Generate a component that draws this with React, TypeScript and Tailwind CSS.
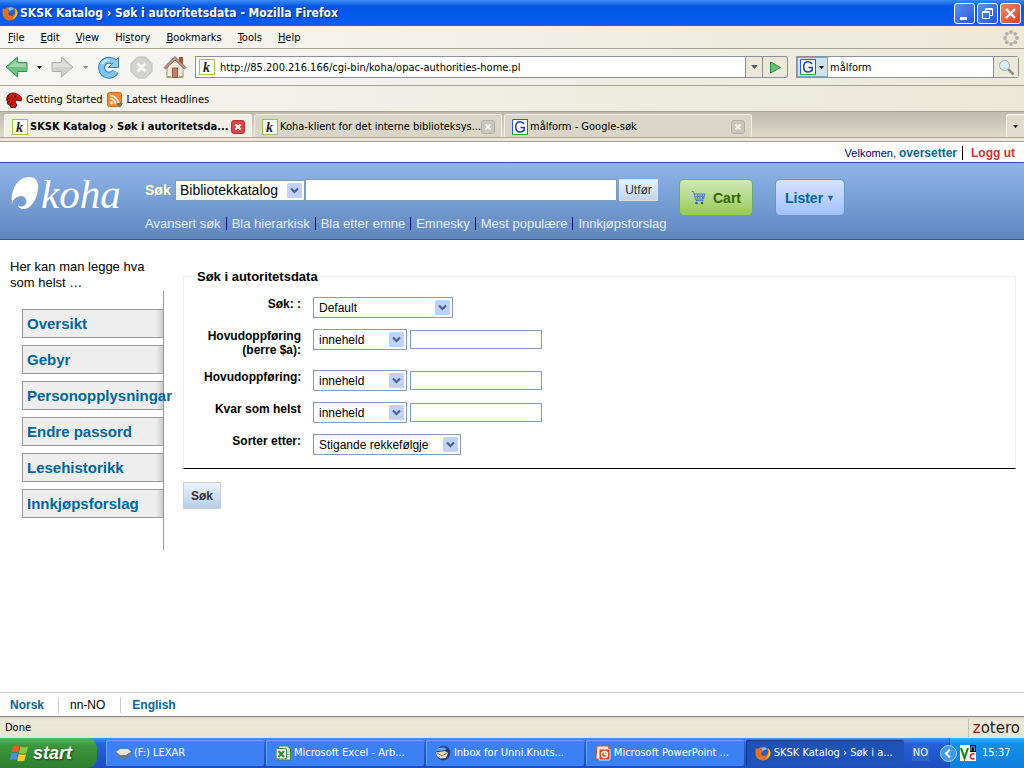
import type { ReactNode } from "react";

const UI = "font-['DejaVu_Sans_Condensed','DejaVu_Sans',sans-serif]";

const MENUS = [
  ["", "F", "ile"],
  ["", "E", "dit"],
  ["", "V", "iew"],
  ["Hi", "s", "tory"],
  ["", "B", "ookmarks"],
  ["", "T", "ools"],
  ["", "H", "elp"],
];

const SEARCH_LINKS = [
  "Avansert søk",
  "Bla hierarkisk",
  "Bla etter emne",
  "Emnesky",
  "Mest populære",
  "Innkjøpsforslag",
];

const SIDE_LINKS = [
  "Oversikt",
  "Gebyr",
  "Personopplysningar",
  "Endre passord",
  "Lesehistorikk",
  "Innkjøpsforslag",
];

export default function App() {
  return (
    <div className="flex min-h-screen flex-col bg-white font-['Liberation_Sans',Arial,sans-serif] text-[13px] leading-4 text-black">
      <TitleBar />
      <BrowserChrome />
      <WelcomeBar />
      <KohaHeader />
      <div className="flex flex-1 items-start">
        <Sidebar />
        <AuthoritySearch />
      </div>
      <LanguageBar />
      <StatusBar />
      <Taskbar />
    </div>
  );
}

/* ---------- browser window ---------- */

function TitleBar() {
  return (
    <header className="flex h-[26px] items-center justify-between bg-linear-to-b from-[#3a8cf5] via-[#0254e3] via-25% to-[#0660f8] pr-[3px] pl-[2px]">
      <div className="flex items-center gap-[2px]">
        <FirefoxIcon />
        <h1 className={`${UI} text-[12px] font-bold text-white [text-shadow:1px_1px_1px_#0a2a80]`}>
          SKSK Katalog › Søk i autoritetsdata - Mozilla Firefox
        </h1>
      </div>
      <div className="flex gap-[2px]">
        <WindowButton label="Minimize">
          <path d="M5 13h7v3H5z" fill="#fff" />
        </WindowButton>
        <WindowButton label="Restore">
          <path d="M7.500 7V4.500h7v7H12M7.500 5.500h7" fill="none" stroke="#fff" />
          <path d="M4.500 7.500h7v7h-7zM4.500 8.500h7" fill="none" stroke="#fff" />
        </WindowButton>
        <WindowButton label="Close" danger>
          <path d="M5 5l9 9M14 5l-9 9" stroke="#fff" strokeWidth="2.400" />
        </WindowButton>
      </div>
    </header>
  );
}

function WindowButton({ label, danger, children }: { label: string; danger?: boolean; children: ReactNode }) {
  return (
    <button
      type="button"
      aria-label={label}
      className={`size-[21px] rounded-[3px] border border-white ${
        danger ? "bg-linear-to-br from-[#f0856a] to-[#d8401f]" : "bg-linear-to-br from-[#5f8ff2] to-[#2458d8]"
      }`}
    >
      <svg viewBox="0 0 19 19" className="size-[19px]">
        {children}
      </svg>
    </button>
  );
}

function BrowserChrome() {
  return (
    <div className={`${UI} text-[11px]`}>
      <div className="flex h-[23px] items-center justify-between border-b border-[#a5a294] bg-linear-to-r from-[#f7f7f5] to-[#ece9d8] pt-px pr-[5px]">
        <nav className="flex">
          {MENUS.map(([before, key, after]) => (
            <button key={key + after} type="button" className="px-2">
              {before}
              <u>{key}</u>
              {after}
            </button>
          ))}
        </nav>
        <Throbber />
      </div>

      <div className="flex h-[37px] items-center border-b border-[#a5a294] bg-linear-to-r from-[#f7f7f5] to-[#ece9d8] pr-[5px] pl-[5px]">
        <button type="button" aria-label="Back"><ArrowIcon fill="#6cc27c" stroke="#2f9a4d" /></button>
        <Caret className="mx-[9px] text-black" />
        <button type="button" aria-label="Forward"><ArrowIcon fill="#d0d0ce" stroke="#b0b0ae" flip /></button>
        <Caret className="mx-[9px] text-[#888]" />
        <button type="button" aria-label="Reload"><ReloadIcon /></button>
        <button type="button" aria-label="Stop" className="ml-[10px]"><StopIcon /></button>
        <button type="button" aria-label="Home" className="ml-[10px]"><HomeIcon /></button>

        <div className="ml-[8px] flex h-[22px] flex-1 items-center border border-[#8a8f99] bg-white pl-[3px]">
          <KohaFavicon />
          <input
            aria-label="Address"
            defaultValue="http://85.200.216.166/cgi-bin/koha/opac-authorities-home.pl"
            className="ml-[5px] h-full min-w-0 flex-1 pt-px outline-none"
          />
          <button type="button" aria-label="Show history" className="flex h-full w-[17px] items-center justify-center border-l border-[#8a8f99] bg-[#ece9d8]">
            <Caret className="text-[#555]" wide />
          </button>
        </div>
        <button type="button" aria-label="Go" className="flex h-[22px] w-[25px] items-center justify-center rounded-r-[3px] border border-l-0 border-[#8a8f99] bg-[#ece9d8]">
          <svg viewBox="0 0 13 13" className="size-[13px]">
            <path d="M1.500 1l10 5.500-10 5.500z" fill="#6cbf78" stroke="#2b8a42" />
          </svg>
        </button>

        <div className="ml-[8px] flex h-[22px] w-[223px] items-center rounded-r-[3px] border border-[#8a8f99] bg-white">
          <button type="button" aria-label="Search engine" className="flex h-full w-[31px] items-center gap-[3px] border border-[#6ab0d0] bg-[#cfe2e8] pl-[2px]">
            <GoogleFavicon />
            <Caret className="text-black" />
          </button>
          <input aria-label="Web search" defaultValue="målform" className="h-full min-w-0 flex-1 pt-px pl-[2px] outline-none" />
          <button type="button" aria-label="Search" className="flex h-full w-[25px] items-center justify-center border-l border-[#8a8f99] bg-[#ece9d8]">
            <svg viewBox="0 0 17 17" className="size-[17px]">
              <path d="M10 10l5.500 5.500" stroke="#8d8d8d" strokeWidth="2.500" />
              <circle cx="6.500" cy="6.500" r="5" fill="#d8ecf6" stroke="#9ab" />
            </svg>
          </button>
        </div>
      </div>

      <div className="flex h-[25px] items-center bg-linear-to-r from-[#f5f4ee] to-[#ebe8d7] pt-[2px] pl-[6px]">
        <a href="#started" className="flex items-center gap-[4px]">
          <DinoIcon />
          Getting Started
        </a>
        <a href="#headlines" className="ml-[4px] flex items-center gap-[4px]">
          <FeedIcon />
          Latest Headlines
        </a>
      </div>

      <div className="border-b border-[#a5a294] bg-[#ece9d8] pb-[3px]">
        <div className="flex h-[27px] items-end gap-[2px] border-t border-b border-t-[#a5a294] border-b-[#a5a294] bg-linear-to-b from-[#bfbcae] to-[#dedbca] pl-[4px]">
          <BrowserTab icon={<KohaFavicon />} title="SKSK Katalog › Søk i autoritetsda..." active />
          <BrowserTab icon={<KohaFavicon />} title="Koha-klient for det interne biblioteksys..." />
          <BrowserTab icon={<GoogleFavicon />} title="målform - Google-søk" />
          <button type="button" aria-label="List tabs" className="ml-auto flex h-[23px] w-[18px] items-center justify-center rounded-tl-[3px] border-t border-l border-[#f8f7f2] bg-[#e0ddce]">
            <Caret className="text-black" />
          </button>
        </div>
      </div>
    </div>
  );
}

function BrowserTab({ icon, title, active }: { icon: ReactNode; title: string; active?: boolean }) {
  return (
    <div
      className={`flex h-[23px] w-[248px] items-center rounded-t-[3px] border border-b-0 pt-px pr-[6px] pl-[7px] ${
        active ? "border-[#fbfaf6] bg-[#f2f0e6] font-bold" : "border-[#f0eee4] bg-[#d9d6c7]"
      }`}
    >
      {icon}
      <span className="ml-[2px] min-w-0 flex-1 whitespace-nowrap">{title}</span>
      <button type="button" aria-label="Close tab">
        <svg viewBox="0 0 14 14" className="size-[14px]">
          <rect x=".5" y=".5" width="13" height="13" rx="2.500" fill={active ? "#d9474b" : "#c9c7bd"} stroke={active ? "#b03338" : "#b3b1a6"} />
          <path d="M4.500 4.500l5 5M9.500 4.500l-5 5" stroke={active ? "#fff" : "#f2f1ea"} strokeWidth="2" />
        </svg>
      </button>
    </div>
  );
}

function StatusBar() {
  return (
    <div className={`${UI} flex h-[22px] items-center justify-between border-t border-[#85837a] bg-linear-to-b from-[#dedbcb] via-[#ece9d8] via-20% to-[#e8e5d4] pl-[5px] text-[11px]`}>
      <span>Done</span>
      <div className="flex h-[18px] items-center border-l border-[#c5c2b2] px-[4px] font-['DejaVu_Sans',sans-serif] text-[15px] text-[#222]">
        <span className="text-[#991111]">z</span>otero
      </div>
    </div>
  );
}

/* ---------- catalogue page ---------- */

function WelcomeBar() {
  return (
    <div className="flex h-[20px] items-center justify-end pt-px pr-[9px] text-[12px]">
      <span className="text-[11px] text-[#000066]">Velkomen,</span>
      <a href="#user" className="ml-[3px] font-bold text-[#006699]">oversetter</a>
      <a href="#logout" className="ml-[5px] border-l border-black pl-[8px] leading-[14px] font-bold text-[#cc3333]">Logg ut</a>
    </div>
  );
}

function KohaHeader() {
  return (
    <div className="flex h-[78px] items-start border-y border-[#335599] bg-linear-to-b from-[#8fb5e9] to-[#6088be]">
      <a href="#home" aria-label="koha" className="flex w-[145px] shrink-0 pt-[11px] pl-[11px] text-white">
        <svg viewBox="0 0 28 34" className="mt-[2px] h-[34px] w-[28px] shrink-0">
          <path
            d="M1 29C-1 15 6 1 18 1c6 0 10 4 9 12-1 10-7 20-14 20-4 0-6-2-6-4 2 2 5 2 7 0 3-3 1-9-4-9-5 0-9 4-9 9z"
            fill="#fff"
          />
        </svg>
        <span className="ml-[2px] font-['Liberation_Serif',serif] text-[41px] leading-[40px] italic">koha</span>
      </a>

      <div className="w-[534px] shrink-0 pt-4">
        <form className="flex items-center" onSubmit={(e) => e.preventDefault()}>
          <label htmlFor="masthead" className="w-[30px] text-[14px] font-bold text-[#ffffcc]">Søk</label>
          <Select id="masthead" className="w-[130px]" textClass="pl-1 text-[14px]" value="Bibliotekkatalog" />
          <input aria-label="Søkjeord" className="h-[22px] w-[312px] border border-[#7f9db9] bg-white px-1 outline-none" />
          <button type="submit" className="ml-[2px] h-[22px] w-[39px] border border-[#e0e0e0] bg-linear-to-b from-[#eaf4fc] to-[#bfd5ea] text-[12px] text-[#333]">
            Utfør
          </button>
        </form>
        <nav className="mt-4 flex whitespace-nowrap">
          {SEARCH_LINKS.map((label) => (
            <a
              key={label}
              href="#search"
              className="mr-[5px] shrink-0 border-r border-[#000088] pr-[5px] leading-[13px] text-[#e4ecfa] last:border-r-0"
            >
              {label}
            </a>
          ))}
        </nav>
      </div>

      <button type="button" className="mt-4 flex h-[37px] w-[74px] shrink-0 items-center justify-center gap-[7px] rounded-[5px] border border-[#6aa886] bg-linear-to-b from-[#d3e8b8] to-[#97ca50] text-[14px] font-bold text-[#336600]">
        <CartIcon />
        Cart
      </button>
      <button type="button" className="mt-4 ml-[22px] flex h-[37px] w-[70px] shrink-0 items-center justify-center gap-[3px] rounded-[5px] border border-[#6198d4] bg-linear-to-b from-[#d6e2fe] to-[#a0c0ff] text-[14px] font-bold text-[#006699]">
        Lister
        <span className="text-[9px] text-[#336699]">▼</span>
      </button>
    </div>
  );
}

function Sidebar() {
  return (
    <aside className="w-[164px] shrink-0 pt-[19px]">
      <p className="pl-[10px]">Her kan man legge hva som helst …</p>
      <nav className="flex flex-col gap-[7px] border-r border-[#999] pt-[18px] pb-8 pl-[22px]">
        {SIDE_LINKS.map((label) => (
          <a
            key={label}
            href="#account"
            className="flex h-[29px] items-center border border-r-0 border-[#999] bg-linear-to-r from-[#eee] from-95% to-[#ccc] pl-1 text-[15px] font-bold whitespace-nowrap text-[#006699]"
          >
            {label}
          </a>
        ))}
      </nav>
    </aside>
  );
}

function AuthoritySearch() {
  return (
    <form className="min-w-0 flex-1 pt-7 pr-2 pl-[19px]" onSubmit={(e) => e.preventDefault()}>
      <fieldset className="border border-[#eee] border-b-black pb-[13px]">
        <legend className="ml-[13px] pt-px font-bold">Søk i autoritetsdata</legend>
        <div className="flex flex-col gap-[11px] pt-3">
          <Field id="authtype" label="Søk: :">
            <Select id="authtype" className="w-[140px]" value="Default" />
          </Field>
          <Field id="mainentry" label="Hovudoppføring (berre $a):">
            <MatchInputs id="mainentry" />
          </Field>
          <Field id="match" label="Hovudoppføring:">
            <MatchInputs id="match" />
          </Field>
          <Field id="anywhere" label="Kvar som helst">
            <MatchInputs id="anywhere" />
          </Field>
          <Field id="orderby" label="Sorter etter:">
            <Select id="orderby" className="w-[148px]" value="Stigande rekkefølgje" />
          </Field>
        </div>
      </fieldset>
      <button type="submit" className="mt-[13px] h-[27px] w-[38px] border border-[#ccc] bg-linear-to-b from-[#eaf4fc] to-[#b5cee6] text-[12px] font-bold text-[#333]">
        Søk
      </button>
    </form>
  );
}

function Field({ id, label, children }: { id: string; label: string; children: ReactNode }) {
  return (
    <div className="flex items-start">
      <label htmlFor={id} className="w-[117px] pb-[2px] pl-5 text-right text-[12px] leading-[14px] font-bold">
        {label}
      </label>
      <div className="ml-3 flex items-center gap-[3px]">{children}</div>
    </div>
  );
}

function MatchInputs({ id }: { id: string }) {
  return (
    <>
      <Select id={id} className="w-[94px]" value="inneheld" />
      <input aria-label="Verdi" className="h-[19px] w-[132px] border border-[#7f9db9] bg-white px-1 outline-none" />
    </>
  );
}

function Select({ id, value, className, textClass = "pl-[5px] text-[12px]" }: { id: string; value: string; className: string; textClass?: string }) {
  return (
    <div className={`relative h-[21px] ${className}`}>
      <select id={id} className={`size-full appearance-none border border-[#7f9db9] bg-white outline-none ${textClass}`}>
        <option>{value}</option>
      </select>
      <svg viewBox="0 0 15 15" className="pointer-events-none absolute top-[3px] right-[3px] size-[15px]">
        <rect width="15" height="15" rx="1.500" fill="#c0d2fb" />
        <path d="M4 5.500l3.500 3.500L11 5.500" fill="none" stroke="#4d6185" strokeWidth="2.200" />
      </svg>
    </div>
  );
}

function LanguageBar() {
  return (
    <footer className="flex h-6 items-center border-t border-[#ccc] pl-[10px] text-[12px]">
      <a href="#no" className="border-r border-[#ccc] pr-[14px] font-bold text-[#006699]">Norsk</a>
      <span className="border-r border-[#ccc] pr-[15px] pl-[11px]">nn-NO</span>
      <a href="#en" className="pl-[11px] font-bold text-[#006699]">English</a>
    </footer>
  );
}

/* ---------- desktop taskbar ---------- */

function Taskbar() {
  return (
    <div className={`${UI} flex h-[30px] items-center bg-linear-to-b from-[#4a90f0] via-[#2560dc] via-20% to-[#1d4ec0] text-[11px] text-white`}>
      <button type="button" className="flex h-full w-[97px] items-center gap-[4px] rounded-r-[10px] bg-linear-to-b from-[#62b562] via-[#3c963c] via-25% to-[#2d7f2d] pl-[10px] font-['Liberation_Sans',sans-serif] text-[18px] font-bold italic [text-shadow:1px_1px_2px_#1a401a]">
        <WindowsFlag />
        start
      </button>
      <div className="ml-[9px] flex h-[26px] min-w-0 flex-1 gap-[2px]">
        <Task icon={<DriveIcon />} title="(F:) LEXAR" />
        <Task icon={<ExcelIcon />} title="Microsoft Excel - Arb..." />
        <Task icon={<ThunderbirdIcon />} title="Inbox for Unni.Knuts..." />
        <Task icon={<PowerPointIcon />} title="Microsoft PowerPoint ..." />
        <Task icon={<FirefoxIcon />} title="SKSK Katalog › Søk i a..." active />
      </div>
      <span className="ml-[8px] bg-[#3565c8] px-px">NO</span>
      <button type="button" aria-label="Show hidden icons" className="z-10 -mr-2 ml-[11px]">
        <svg viewBox="0 0 17 17" className="size-[17px]">
          <circle cx="8.500" cy="8.500" r="8" fill="#3f9ae8" stroke="#a5d2fa" />
          <path d="M10 4.500l-4 4 4 4" fill="none" stroke="#fff" strokeWidth="2" />
        </svg>
      </button>
      <div className="flex h-full w-[75px] items-center gap-[6px] border-l border-[#0b4fa0] bg-linear-to-b from-[#3ab2f5] via-[#1290e8] via-20% to-[#0f80dc] pl-[10px]">
        <VncIcon />
        <span>15:37</span>
      </div>
    </div>
  );
}

function Task({ icon, title, active }: { icon: ReactNode; title: string; active?: boolean }) {
  return (
    <button
      type="button"
      className={`flex min-w-0 flex-1 items-center gap-[3px] overflow-hidden rounded-[2px] pl-[9px] whitespace-nowrap ${
        active ? "bg-[#1e52b7] shadow-[inset_1px_1px_1px_#123a85]" : "bg-[#3c81f3] shadow-[inset_1px_1px_1px_#6aa3fa]"
      }`}
    >
      {icon}
      {title}
    </button>
  );
}

/* ---------- icons ---------- */

function Caret({ className, wide }: { className: string; wide?: boolean }) {
  return (
    <svg viewBox="0 0 5 3" className={`shrink-0 ${wide ? "h-[4px] w-[7px]" : "h-[3px] w-[5px]"} ${className}`}>
      <path d="M0 0h5L2.500 3z" fill="currentColor" />
    </svg>
  );
}

function FirefoxIcon() {
  return (
    <svg viewBox="0 0 16 16" className="size-4 shrink-0">
      <circle cx="8.500" cy="7.500" r="6.500" fill="#2b5fb8" />
      <path d="M6 3c2-1 5-1 6 1l-2 1-3 1z" fill="#7fc0ee" />
      <path d="M1 3l2 1c1-1 2-1.500 3.500-1.500L5.500 5l2.500 1.500L6 8c0 2 1.500 3 3.500 3S13 9 13 7c0-2-1-3-1-4 2 1 3.500 3 3.500 5.500A7.300 7.300 0 0 1 8 15.500C4 15.500.5 12.500.5 8.500.5 6.500.5 5 1 3z" fill="#e8701a" />
      <path d="M13 3c2 2 2.500 4 2.500 5.500-.5 3-3 5-5.500 5.500 3-2 4.500-6 3-11z" fill="#fbc53a" />
    </svg>
  );
}

function KohaFavicon() {
  return (
    <svg viewBox="0 0 16 16" className="size-4 shrink-0">
      <rect x=".5" y=".5" width="15" height="15" fill="#fff" stroke="#99cc33" />
      <text x="4" y="13" fontFamily="Liberation Serif, serif" fontSize="14" fontStyle="italic" fontWeight="bold" fill="#222">k</text>
    </svg>
  );
}

function GoogleFavicon() {
  return (
    <svg viewBox="0 0 16 16" className="size-4 shrink-0">
      <path d="M0 0h16v16H0z" fill="#fff" />
      <path d="M.5 16V.5H15" fill="none" stroke="#2a5bd7" />
      <path d="M15.500 0v15" fill="none" stroke="#d8242a" />
      <path d="M0 15.500h16" fill="none" stroke="#2ca53c" />
      <path d="M12 5C11 3.300 9.800 2.800 8.300 2.800 5.500 2.800 3.700 5 3.700 8s1.800 5 4.600 5c1.700 0 3-.7 3.900-1.600V8.500H8.500" fill="none" stroke="#1e3fae" strokeWidth="1.500" />
    </svg>
  );
}

function ArrowIcon({ fill, stroke, flip }: { fill: string; stroke: string; flip?: boolean }) {
  return (
    <svg viewBox="0 0 23 22" className={`h-[22px] w-[23px] ${flip ? "-scale-x-100" : ""}`}>
      <path d="M1 11L12.500 1v5.500H22v9h-9.500V21z" fill={fill} stroke={stroke} strokeLinejoin="round" />
      <path d="M3.500 11l8-7v3.500H21v3.500z" fill="#fff" opacity=".35" />
    </svg>
  );
}

function ReloadIcon() {
  return (
    <svg viewBox="0 0 23 23" className="size-[23px]">
      <path d="M18.500 15.500A7.500 7.500 0 1 1 17 6" fill="none" stroke="#2f7fc4" strokeWidth="7" />
      <path d="M18.500 15.500A7.500 7.500 0 1 1 17 6" fill="none" stroke="#7fc4f0" strokeWidth="5" />
      <path d="M21.500 1.500v10h-10z" fill="#8fcdf4" stroke="#2f7fc4" strokeLinejoin="round" />
      <path d="M16.500 6.500l2-2" stroke="#8fcdf4" strokeWidth="4" />
      <path d="M5 8c1.500-3 5-4.500 8-3.500" fill="none" stroke="#d3edfc" strokeWidth="2" />
    </svg>
  );
}

function StopIcon() {
  return (
    <svg viewBox="0 0 23 23" className="size-[23px]">
      <path d="M7.500 1h8L22 7.500v8L15.500 22h-8L1 15.500v-8z" fill="#d2d2d0" stroke="#bcbcba" />
      <path d="M7.500 7.500l8 8M15.500 7.500l-8 8" stroke="#f4f4f2" strokeWidth="3" />
    </svg>
  );
}

function HomeIcon() {
  return (
    <svg viewBox="0 0 24 24" className="size-6">
      <path d="M16 2h4v7h-4z" fill="#b0523c" />
      <path d="M4 11.500L12 4l8 7.500V22.500H4z" fill="#f3e7d8" stroke="#a08d7c" />
      <path d="M1 12.500L12 1.500l11 11-1.500 1.500L12 5l-9.500 9z" fill="#bb9486" stroke="#7f5a4e" strokeWidth=".8" />
      <path d="M9.500 13h5v9.500h-5z" fill="#c08070" stroke="#9a5545" />
      <path d="M4 21h4v1.500H4zM16 21h4v1.500h-4z" fill="#8dbb5c" />
    </svg>
  );
}

function DinoIcon() {
  return (
    <svg viewBox="0 0 16 16" className="size-4">
      <path d="M1 8C0 4 3 1 7 1c3 0 5 1 8 4l1 3-2 1-4-1-1 2 2 3-2 3H5L4 13 1.500 12z" fill="#d0170f" stroke="#400" strokeWidth=".8" />
      <path d="M1 5l3-3M.5 8l3-2M1 11l3-2M4 13.500l2-3" stroke="#200" />
      <circle cx="9" cy="4.500" r="1" fill="#300" />
    </svg>
  );
}

function FeedIcon() {
  return (
    <svg viewBox="0 0 16 16" className="size-4">
      <rect x=".5" y=".5" width="14" height="14" rx="2" fill="#f08a2c" stroke="#cc6a15" />
      <circle cx="4.500" cy="11" r="1.400" fill="#fff" />
      <path d="M3 6.500a5.500 5.500 0 0 1 5.500 5.500M3 3.500a8.500 8.500 0 0 1 8.500 8.500" fill="none" stroke="#fff" strokeWidth="1.600" />
      <path d="M9 11h7l-3.500 4.500z" fill="#6b7280" />
    </svg>
  );
}

function Throbber() {
  return (
    <svg viewBox="0 0 16 16" className="size-4" fill="#b0aeaa">
      <circle cx="8" cy="2" r="1.900" />
      <circle cx="12.200" cy="3.800" r="1.900" />
      <circle cx="14" cy="8" r="1.900" />
      <circle cx="12.200" cy="12.200" r="1.900" />
      <circle cx="8" cy="14" r="1.900" />
      <circle cx="3.800" cy="12.200" r="1.900" />
      <circle cx="2" cy="8" r="1.900" />
      <circle cx="3.800" cy="3.800" r="1.900" />
    </svg>
  );
}

function CartIcon() {
  return (
    <svg viewBox="0 0 15 15" className="size-[15px]">
      <path d="M.5 1.500h2L5 10.500h7.500M3 4h11l-1.500 5H5M3.500 6.500h10M6.500 4v5M9 4v5M11.500 4v5" fill="none" stroke="#4a7fc0" />
      <circle cx="5.500" cy="13" r="1.300" fill="#2e5f9e" />
      <circle cx="11" cy="13" r="1.300" fill="#2e5f9e" />
    </svg>
  );
}

function WindowsFlag() {
  return (
    <svg viewBox="0 0 19 18" className="h-[18px] w-[19px]">
      <path d="M3 2c2-1.300 4.500-1 6.500 0L8 8.500C6 7.500 3.500 7.500 1.500 8.500z" fill="#ee5a26" />
      <path d="M10.500 2.500c2 1 4.500 1.200 7.500 0L16.500 9c-2.500 1.200-5 1-7.500-.1z" fill="#8ac63f" />
      <path d="M1.200 9.500c2-1 4.500-1 6.500 0L6.300 16c-2-1-4.300-1-6.300 0z" fill="#4c8ef0" />
      <path d="M8.700 10c2.300 1 4.800 1.200 7.300 0l-1.500 6.500c-2.500 1.200-5 1-7.300-.1z" fill="#fbc92d" />
    </svg>
  );
}

function DriveIcon() {
  return (
    <svg viewBox="0 0 16 16" className="size-4 shrink-0">
      <path d="M1 7l4-3h8l3 3-5 3H5z" fill="#e5e5e2" />
      <path d="M1 7l4 3h6l5-3v2l-5 4H6L1 9z" fill="#77756f" />
    </svg>
  );
}

function ExcelIcon() {
  return (
    <svg viewBox="0 0 16 16" className="size-4 shrink-0">
      <path d="M3.500 1h9l3 3v11h-12z" fill="#f2f8ee" stroke="#3c8a3c" />
      <path d="M11 7h4M11 9.500h4M11 12h4" stroke="#8fbf80" />
      <rect x="1" y="3.500" width="10.500" height="10.500" rx="1" fill="#f6fbf3" stroke="#3c9440" strokeWidth="1.200" />
      <path d="M3.500 6l5.500 6M9 6l-5.500 6" stroke="#2f8a35" strokeWidth="2" />
    </svg>
  );
}

function ThunderbirdIcon() {
  return (
    <svg viewBox="0 0 16 16" className="size-4 shrink-0">
      <path d="M2 4C5 0 12 0 14.500 4c2 4 .5 9-4 11-4 1-8-1-9-5z" fill="#1c3f78" />
      <path d="M1 5c3-3 8-3 11-1L8 5.500 3 6z" fill="#68a8e4" />
      <path d="M1 7.500l9-1.500 3 2-2 5-6 .5L2 11z" fill="#e8dcc4" />
      <path d="M2 8l5 3 5-3" fill="none" stroke="#866a48" />
    </svg>
  );
}

function PowerPointIcon() {
  return (
    <svg viewBox="0 0 16 16" className="size-4 shrink-0">
      <path d="M2 1h11.500l-1 13H.8z" fill="#fbe9e2" stroke="#d14a20" />
      <rect x="4" y="4" width="11" height="11" rx="1" fill="#d9481e" stroke="#fff" strokeWidth=".8" />
      <circle cx="9.500" cy="9.500" r="3" fill="none" stroke="#fff" strokeWidth="1.300" />
      <path d="M9.500 9.500V7M9.500 9.500H12" stroke="#fff" strokeWidth="1.300" />
    </svg>
  );
}

function VncIcon() {
  return (
    <svg viewBox="0 0 16 16" className="size-4 shrink-0">
      <path d="M0 0h16v16H0z" fill="#fff" />
      <path d="M10 0h6v7h-6z" fill="#000" />
      <path d="M1 3l3.500 10L8 3" fill="none" stroke="#1c8a1c" strokeWidth="2.200" />
      <path d="M11 6V3c1-2 3.500-2 3.500 0v3" fill="none" stroke="#5a7dff" strokeWidth="1.500" />
      <path d="M14.500 9.500c-1.500-1.500-4-.5-4 2s2.500 3 4 2" fill="none" stroke="#d8242a" strokeWidth="1.600" />
    </svg>
  );
}
